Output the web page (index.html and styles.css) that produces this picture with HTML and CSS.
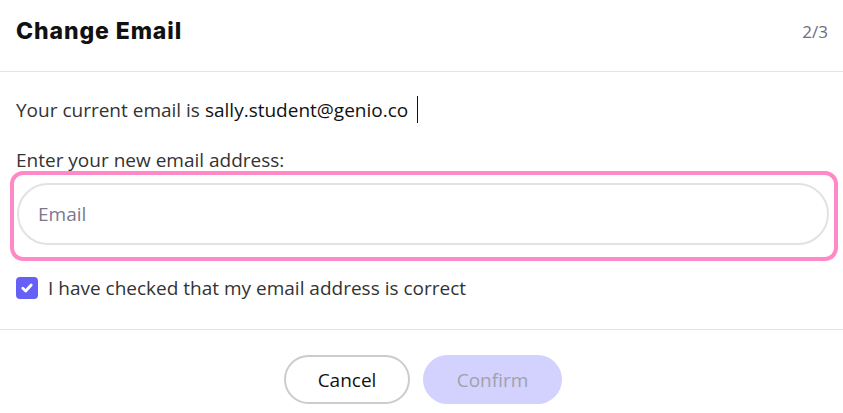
FILE: index.html
```html
<!DOCTYPE html>
<html lang="en">
<head>
<meta charset="utf-8">
<title>Change Email</title>
<link rel="stylesheet" href="styles.css">
</head>
<body>
<div class="dialog">
  <header class="header">
    <h1 class="title">Change Email</h1>
    <span class="step">2/3</span>
  </header>
  <section class="content">
    <p class="current">Your current email is <span class="addr">sally.student@genio.co</span><span class="caret"></span></p>
    <label class="label" for="email">Enter your new email address:</label>
    <div class="ring">
      <input class="input" id="email" type="text" placeholder="Email">
    </div>
    <div class="check-row">
      <span class="checkbox">
        <svg width="14" height="14" viewBox="0 0 14 14"><path d="M2.8 7.3 L5.7 10 L11.2 4" fill="none" stroke="#fff" stroke-width="2.8" stroke-linecap="round" stroke-linejoin="round"/></svg>
      </span>
      <span class="check-text">I have checked that my email address is correct</span>
    </div>
  </section>
  <footer class="footer">
    <button class="btn btn-cancel">Cancel</button>
    <button class="btn btn-confirm" disabled>Confirm</button>
  </footer>
</div>
</body>
</html>
```
FILE: styles.css
```css
html, body {
  margin: 0;
  padding: 0;
  background: #ffffff;
}
body {
  font-family: "Open Sans", "Noto Sans", sans-serif;
  color: #333333;
}
.dialog {
  width: 843px;
}
.header {
  height: 72px;
  box-sizing: border-box;
  padding: 0 15px 9px 16px;
  display: flex;
  align-items: center;
  justify-content: space-between;
  border-bottom: 1px solid #e4e4e4;
}
.title {
  margin: 0;
  font-family: "Inter", sans-serif;
  font-weight: 800;
  font-size: 23px;
  letter-spacing: 0.9px;
  color: #111111;
}
.step {
  font-size: 17px;
  color: #6e6b82;
}
.content {
  display: flex;
  flex-direction: column;
}
.current {
  margin: 24px 0 0 16px;
  font-size: 19px;
  line-height: 24px;
  display: flex;
  align-items: center;
  color: #333;
}
.addr {
  color: #111;
  margin-left: 5px;
}
.caret {
  display: inline-block;
  width: 1px;
  height: 27px;
  background: #111;
  margin-left: 9px;
}
.label {
  margin: 25px 0 0 16px;
  font-size: 19px;
  line-height: 24px;
  color: #333;
}
.ring {
  margin: -1px 5px 0 10px;
  border: 4px solid #ff88c8;
  border-radius: 13px;
  padding: 8px 5px 12px 3px;
}
.input {
  display: block;
  width: 100%;
  box-sizing: border-box;
  height: 62px;
  border: 2px solid #e2e2e6;
  border-radius: 31px;
  padding: 0 19px;
  font-family: inherit;
  font-size: 19px;
  color: #333;
  outline: none;
}
.input::placeholder {
  color: #7a7890;
}
.check-row {
  margin: 16px 0 0 16px;
  display: flex;
  align-items: center;
  height: 22px;
}
.checkbox {
  width: 22px;
  height: 22px;
  border-radius: 4px;
  background: #6660f6;
  display: flex;
  align-items: center;
  justify-content: center;
}
.check-text {
  margin-left: 10px;
  font-size: 19px;
  color: #333;
}
.footer {
  margin-top: 30px;
  border-top: 1px solid #e4e4e4;
  padding-top: 25px;
  display: flex;
  justify-content: center;
  gap: 13px;
  padding-left: 3px;
}
.btn {
  height: 49px;
  border-radius: 25px;
  font-family: inherit;
  font-size: 19px;
  box-sizing: border-box;
}
.btn-cancel {
  width: 126px;
  background: #fff;
  border: 2px solid #cccccc;
  color: #111;
}
.btn-confirm {
  width: 139px;
  background: #d3d1fd;
  border: none;
  color: #a2a1ab;
}
```
